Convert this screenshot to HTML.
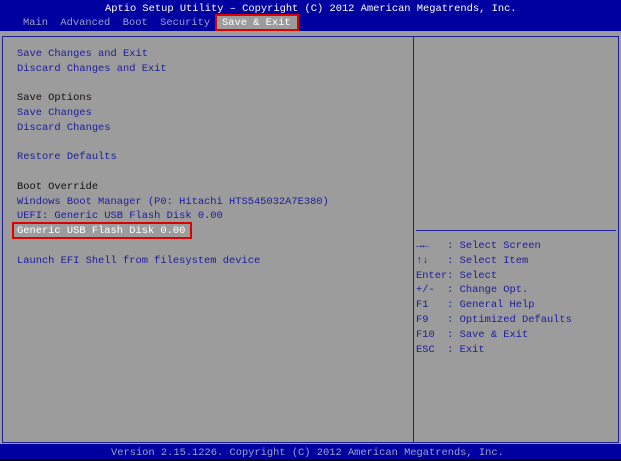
<!DOCTYPE html><html><head><style>
body{margin:0;width:621px;height:461px;background:#9c9c9c;position:relative;overflow:hidden;font-family:"Liberation Mono",monospace;font-size:10.4px;}
.t{position:absolute;white-space:pre;line-height:12px;height:12px;}
.b{color:#1c1c9c}.k{color:#101010}.w{color:#fff}
.m .t{margin-top:2px}
</style></head><body>
<div style="position:absolute;left:0;top:0;width:621px;height:31px;background:#0000a0"></div>
<div class="t w" style="left:105px;top:3px">Aptio Setup Utility – Copyright (C) 2012 American Megatrends, Inc.</div>
<div class="t" style="left:23px;top:17px;color:#9ca0c8">Main  Advanced  Boot  Security</div>
<div style="position:absolute;left:215px;top:14px;width:80px;height:13px;background:#9c9c9c;border:2px solid #e00000"></div>
<div class="t w" style="left:222px;top:17px">Save &amp; Exit</div>
<div style="position:absolute;left:2px;top:36px;width:615px;height:405px;border:1px solid #20209a"></div>
<div style="position:absolute;left:413px;top:36px;width:1px;height:406px;background:#20209a"></div>
<div style="position:absolute;left:416px;top:230px;width:200px;height:1px;background:#20209a"></div>
<div class="m">
<div class="t b" style="left:17px;top:46px">Save Changes and Exit</div>
<div class="t b" style="left:17px;top:61px">Discard Changes and Exit</div>
<div class="t k" style="left:17px;top:90px">Save Options</div>
<div class="t b" style="left:17px;top:105px">Save Changes</div>
<div class="t b" style="left:17px;top:120px">Discard Changes</div>
<div class="t b" style="left:17px;top:149px">Restore Defaults</div>
<div class="t k" style="left:17px;top:179px">Boot Override</div>
<div class="t b" style="left:17px;top:194px">Windows Boot Manager (P0: Hitachi HTS545032A7E380)</div>
<div class="t b" style="left:17px;top:208px">UEFI: Generic USB Flash Disk 0.00</div>
<div class="t w" style="left:17px;top:223px">Generic USB Flash Disk 0.00</div>
<div class="t b" style="left:17px;top:253px">Launch EFI Shell from filesystem device</div>
<div class="t b" style="left:416px;top:238px">→←   : Select Screen</div>
<div class="t b" style="left:416px;top:253px">↑↓   : Select Item</div>
<div class="t b" style="left:416px;top:268px">Enter: Select</div>
<div class="t b" style="left:416px;top:282px">+/-  : Change Opt.</div>
<div class="t b" style="left:416px;top:297px">F1   : General Help</div>
<div class="t b" style="left:416px;top:312px">F9   : Optimized Defaults</div>
<div class="t b" style="left:416px;top:327px">F10  : Save &amp; Exit</div>
<div class="t b" style="left:416px;top:342px">ESC  : Exit</div>
</div>
<div style="position:absolute;left:12px;top:222px;width:176px;height:13px;border:2px solid #e00000"></div>
<div style="position:absolute;left:0;top:444px;width:621px;height:15px;background:#0000a0"></div>
<div style="position:absolute;left:0;top:459px;width:621px;height:2px;background:#000"></div>
<div class="t" style="left:111px;top:447px;color:#9ca0c8">Version 2.15.1226. Copyright (C) 2012 American Megatrends, Inc.</div>
</body></html>
